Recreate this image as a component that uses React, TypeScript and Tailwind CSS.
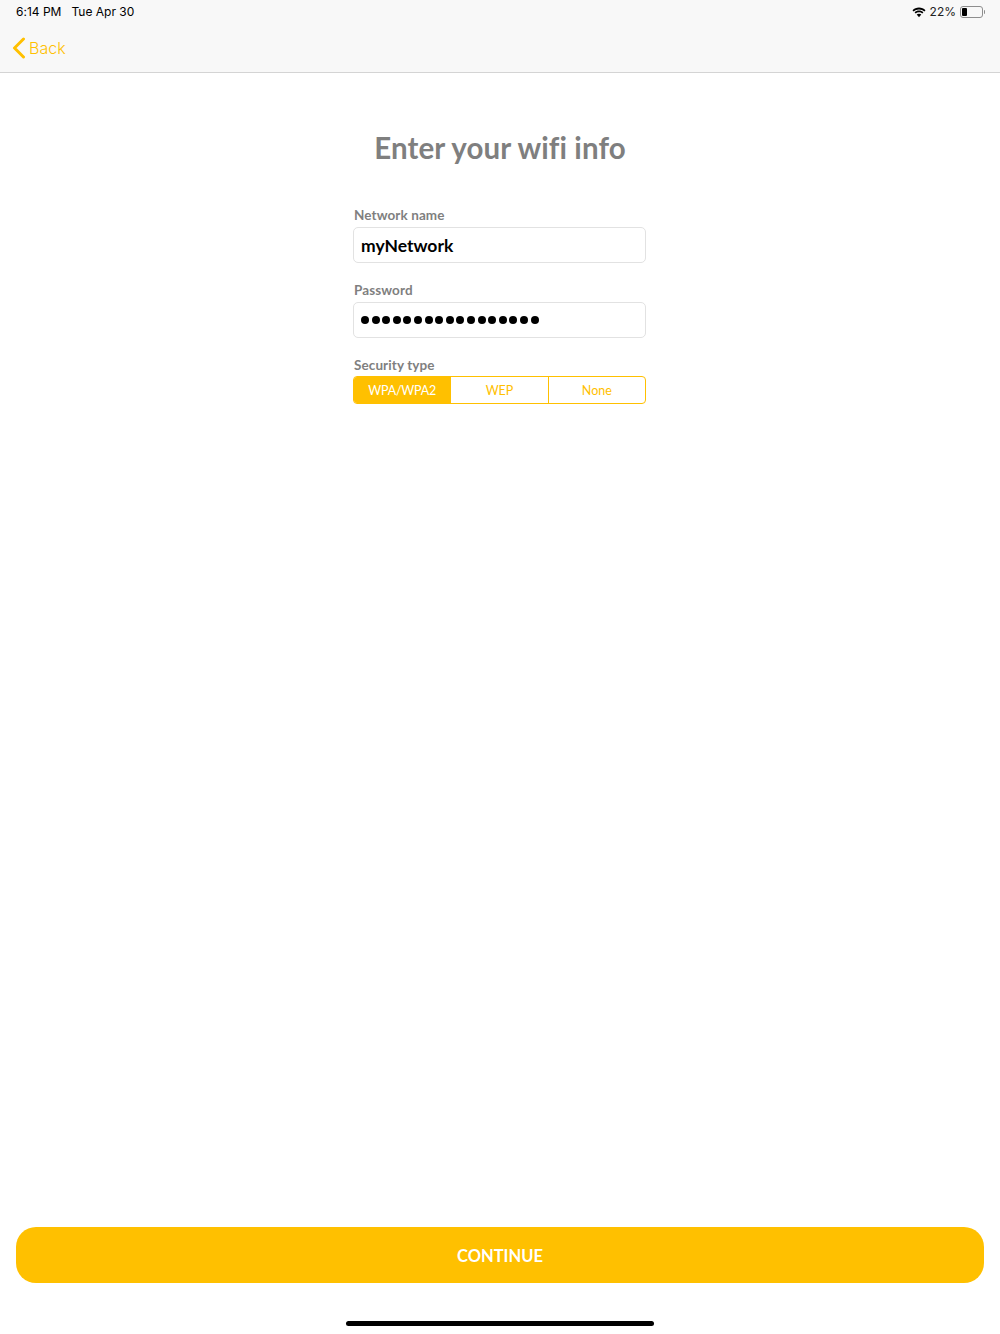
import { FC } from "react";

const BackChevron: FC = () => (
  <svg width="14" height="22" viewBox="0 0 14 22" fill="none">
    <path d="M11.5 2 L2.5 11 L11.5 20" stroke="#ffc000" strokeWidth="3" strokeLinecap="round" strokeLinejoin="round" />
  </svg>
);

const WifiIcon: FC = () => (
  <svg width="14" height="11" viewBox="0 0 14 11" fill="#000">
    <path d="M7 2.4c2.1 0 4 .8 5.4 2.1l1.1-1.2C11.8 1.6 9.5.6 7 .6S2.200 1.600.5 3.300l1.100 1.200C3 3.200 4.900 2.400 7 2.400z" />
    <path d="M7 5.300c1.300 0 2.400.5 3.300 1.200l1.100-1.200C10.200 4.200 8.700 3.600 7 3.600s-3.200.6-4.400 1.700l1.100 1.200C4.600 5.800 5.700 5.300 7 5.300z" />
    <path d="M7 6.700c-.9 0-1.700.3-2.300.9L7 10.200l2.300-2.600C8.700 7 7.900 6.700 7 6.700z" />
  </svg>
);

const BatteryIcon: FC = () => (
  <div className="flex items-center">
    <div className="flex h-[12px] w-[23px] items-stretch rounded-[3px] border border-[#8e8e8e] p-px">
      <div className="w-[5px] rounded-[1px] bg-black" />
    </div>
    <div className="ml-px h-[4px] w-px rounded-r-sm bg-[#8e8e8e]" />
  </div>
);

const Field: FC<{ label: string; children: React.ReactNode }> = ({ label, children }) => (
  <div className="flex flex-col">
    <label className="mb-[3px] pl-px text-[13.500px] font-bold leading-[18px] tracking-[0.1px] text-[#7f7f7f]">{label}</label>
    <div className="flex h-[36px] items-center rounded-[5px] border border-[#e2e2e2] px-[7px] text-black">
      {children}
    </div>
  </div>
);

const App: FC = () => {
  const dots = Array.from({ length: 17 });
  return (
    <div className="flex h-[1334px] w-[1000px] flex-col bg-white font-['Lato',sans-serif] [font-variant-ligatures:none]">
      <header className="h-[73px] border-b border-[#d4d4d4] bg-[#f8f8f8]">
        <div className="flex h-[24px] items-center justify-between pl-[16px] pr-[15px] font-['Inter',sans-serif] text-[12px] text-black">
          <div className="flex gap-[10px]">
            <span>6:14 PM</span>
            <span>Tue Apr 30</span>
          </div>
          <div className="flex items-center gap-[4px]">
            <WifiIcon />
            <span className="text-[#222]">22%</span>
            <BatteryIcon />
          </div>
        </div>
        <div className="flex h-[47px] items-center gap-[3px] pl-[12px] font-['Inter',sans-serif] text-[16px] font-light text-[#ffc000]">
          <BackChevron />
          <span>Back</span>
        </div>
      </header>

      <main className="flex flex-1 flex-col items-center">
        <h1 className="mt-[56px] text-[29.500px] font-bold leading-[38px] tracking-[0.1px] text-[#7f7f7f]">Enter your wifi info</h1>

        <div className="mr-[1px] mt-[39px] flex w-[293px] flex-col gap-[18px]">
          <Field label="Network name">
            <span className="pt-[2px] text-[17.500px] font-bold">myNetwork</span>
          </Field>
          <Field label="Password">
            <div className="flex gap-[2.600px]">
              {dots.map((_, i) => (
                <span key={i} className="h-[8px] w-[8px] rounded-full bg-black" />
              ))}
            </div>
          </Field>
          <div className="flex flex-col">
            <label className="mb-[2px] pl-px text-[13.500px] font-bold leading-[18px] tracking-[0.1px] text-[#7f7f7f]">Security type</label>
            <div className="flex h-[28px] overflow-hidden rounded-[4px] border border-[#ffc000] text-[12.500px] text-[#ffc000]">
              <div className="flex flex-1 items-center justify-center bg-[#ffc000] pt-[2px] tracking-[-0.2px] text-white">WPA/WPA2</div>
              <div className="flex flex-1 items-center justify-center border-l border-[#ffc000] pt-[2px]">WEP</div>
              <div className="flex flex-1 items-center justify-center border-l border-[#ffc000] pt-[2px]">None</div>
            </div>
          </div>
        </div>
      </main>

      <div className="px-[16px]">
        <button className="flex h-[56px] w-full items-center justify-center rounded-[20px] bg-[#ffc000] pt-[2px] text-[16.500px] font-bold text-white">
          CONTINUE
        </button>
      </div>
      <div className="flex h-[51px] items-end justify-center pb-[8px]">
        <div className="h-[5px] w-[308px] rounded-full bg-black" />
      </div>
    </div>
  );
};

export default App;
